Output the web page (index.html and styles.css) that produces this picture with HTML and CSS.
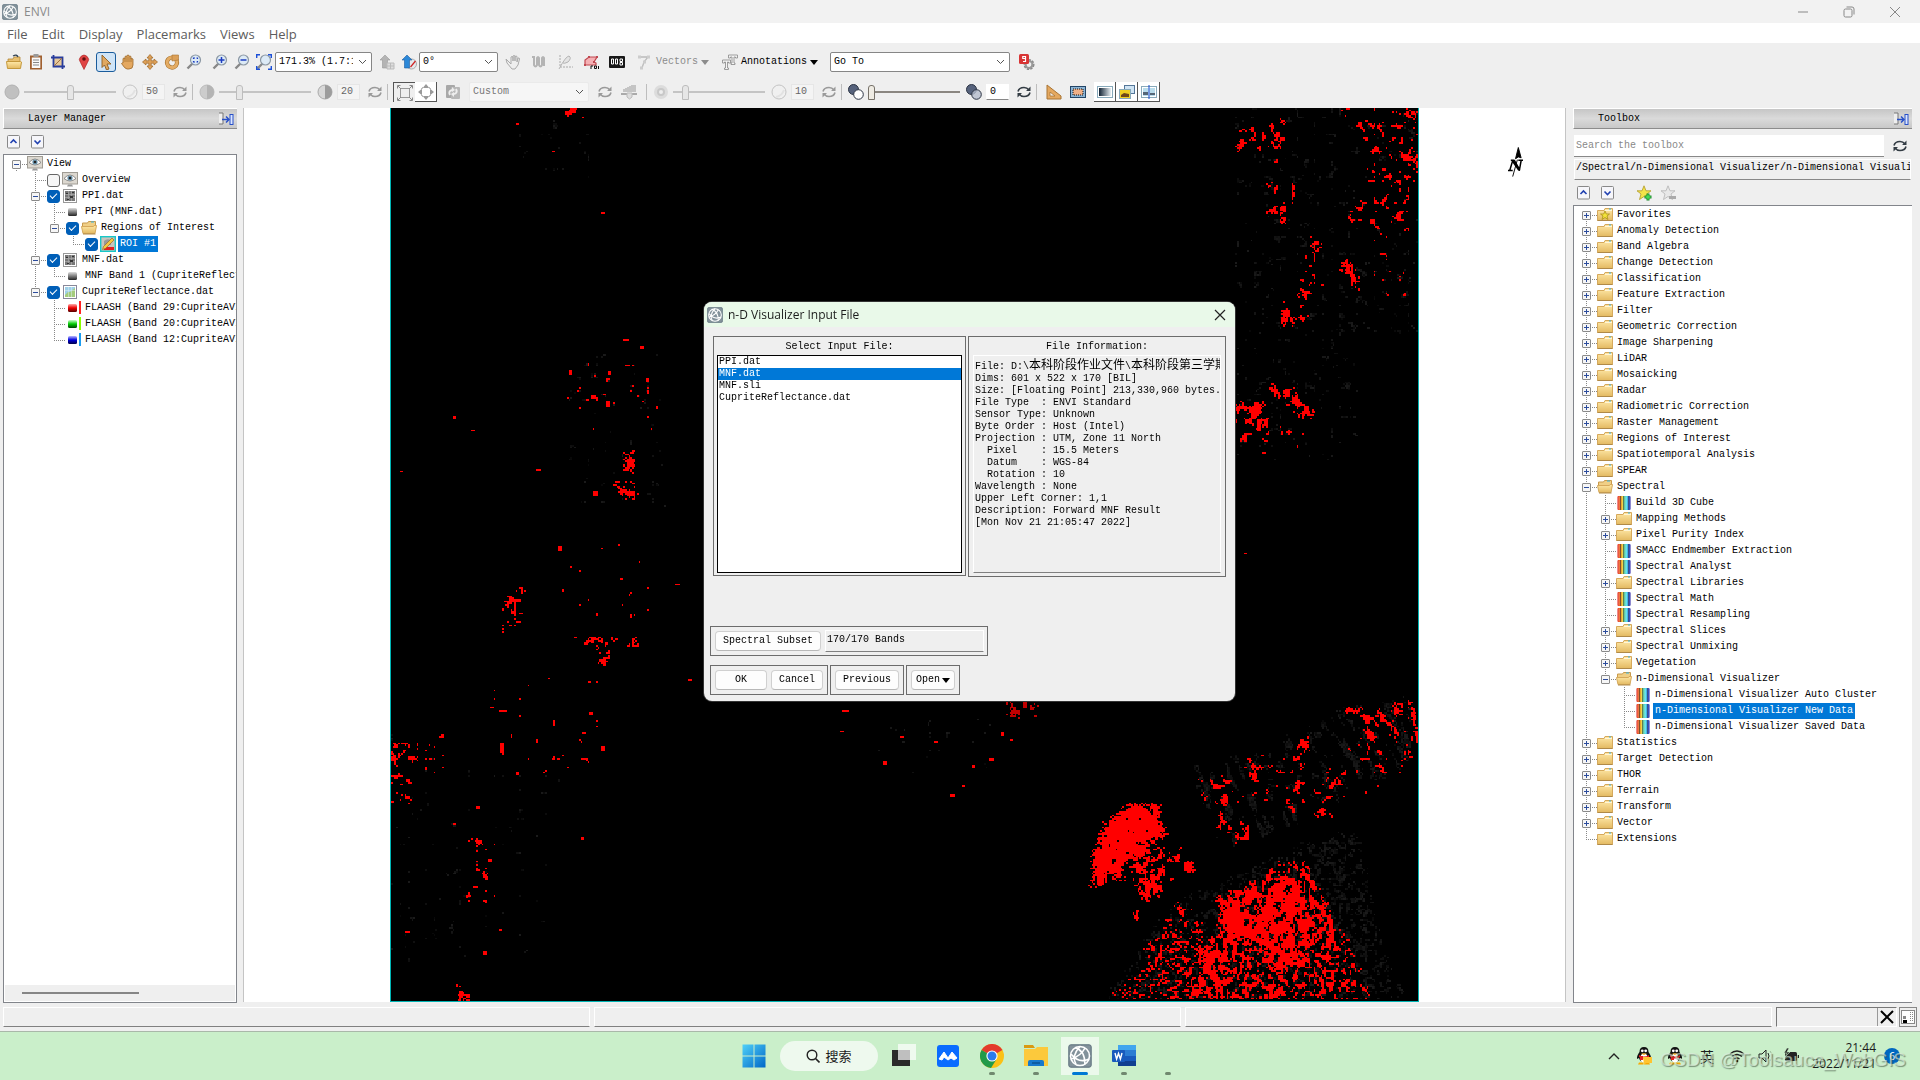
FILE: index.html
```html
<!DOCTYPE html>
<html lang="en">
<head>
<meta charset="utf-8">
<title>ENVI</title>
<link rel="stylesheet" href="styles.css">
</head>
<body>
<svg class="sprite" aria-hidden="true">
  <defs>
    <linearGradient id="gFolder" x1="0" y1="0" x2="0" y2="1"><stop offset="0" stop-color="#ffe9a8"/><stop offset="1" stop-color="#e3b961"/></linearGradient>
    <linearGradient id="gDark" x1="0" y1="0" x2="0" y2="1"><stop offset="0" stop-color="#ddd"/><stop offset="1" stop-color="#222"/></linearGradient>
    <linearGradient id="gRed" x1="0" y1="0" x2="0" y2="1"><stop offset="0" stop-color="#faa"/><stop offset=".5" stop-color="#e00"/><stop offset="1" stop-color="#500"/></linearGradient>
    <linearGradient id="gGreen" x1="0" y1="0" x2="0" y2="1"><stop offset="0" stop-color="#cfc"/><stop offset=".5" stop-color="#0c0"/><stop offset="1" stop-color="#040"/></linearGradient>
    <linearGradient id="gBlue" x1="0" y1="0" x2="0" y2="1"><stop offset="0" stop-color="#bbf"/><stop offset=".5" stop-color="#00d"/><stop offset="1" stop-color="#004"/></linearGradient>
    <linearGradient id="gWin" x1="0" y1="0" x2="1" y2="1"><stop offset="0" stop-color="#4fd0f8"/><stop offset="1" stop-color="#0067c8"/></linearGradient>
    <linearGradient id="gSpec" x1="0" y1="0" x2="1" y2="0"><stop offset="0" stop-color="#e01818"/><stop offset=".25" stop-color="#f08018"/><stop offset=".4" stop-color="#e8e050"/><stop offset=".55" stop-color="#58c8a0"/><stop offset=".7" stop-color="#40e0f0"/><stop offset=".85" stop-color="#5080e0"/><stop offset="1" stop-color="#2018a0"/></linearGradient>
    <linearGradient id="gMono" x1="0" y1="0" x2="1" y2="0"><stop offset="0" stop-color="#123"/><stop offset="1" stop-color="#e8f0f4"/></linearGradient>
  </defs>
  <symbol id="folder" viewBox="0 0 16 16"><path d="M.5 3.500h6.500l1-2h7.500V13.500H.5z" fill="url(#gFolder)" stroke="#d6a95c" stroke-width="1"/><path d="M8 3.500h7" stroke="#fff6d8"/><path d="M12 2h2" stroke="#35b6e8" stroke-width="1.200"/><path d="M.5 13.500h15" stroke="#b08a48"/></symbol>
  <symbol id="folderopen" viewBox="0 0 16 16"><path d="M1.500 3h5l1-1.500h7V8H1.500z" fill="#f0cf86" stroke="#c89a4c"/><path d="M10 2h3" stroke="#35b6e8"/><path d="M.5 6.500h12l.5-1h2.500L14 13.500H2z" fill="url(#gFolder)" stroke="#d6a95c"/><path d="M2 14h12.500" stroke="#b08a48"/></symbol>
  <symbol id="folderstar" viewBox="0 0 16 16"><use href="#folder"/><path d="M8 4l1.300 3H12.500L10 9l1 3.500L8 10.500 5 12.500 6 9 3.500 7H6.700z" fill="#f2e23a" stroke="#a89018" stroke-width=".8"/></symbol>
  <symbol id="spec" viewBox="0 0 16 16"><rect x="1.500" y="1" width="13" height="14" rx="1" fill="url(#gSpec)"/><path d="M4.500 1v14M7.500 1v14M12.500 1v14" stroke="#234" stroke-width=".8" opacity=".7"/><path d="M3 1.500v13M10 1.500v13" stroke="#fff" stroke-width=".6" opacity=".6"/></symbol>
  <symbol id="eye" viewBox="0 0 16 16"><rect x=".5" y=".5" width="15" height="11.500" fill="#dcd8d0" stroke="#a09c94"/><path d="M5 14.500h6l-1-2H6z" fill="#999"/><path d="M2 6.500q6-7 12 0q-6 5-12 0z" fill="#fff" stroke="#666" stroke-width=".7"/><circle cx="8" cy="6" r="2.600" fill="#6a94ac"/><circle cx="8" cy="6" r="1.300" fill="#222"/></symbol>
  <symbol id="raster" viewBox="0 0 16 16"><rect x="1.500" y="1.500" width="13" height="13" fill="#fff" stroke="#999"/><path d="M3 3h10v10H3z" fill="#777"/><path d="M3 6.500h10M3 9.500h10M6.500 3v10M9.500 3v10" stroke="#aaa" stroke-width=".7"/><path d="M4 5h2v1H4zM8 8h3v2H8zM5 11h2v1H5zM10 4h2v1h-2z" fill="#333"/></symbol>
  <symbol id="rastercolor" viewBox="0 0 16 16"><rect x="1.500" y="1.500" width="13" height="13" fill="#fff" stroke="#889"/><path d="M3 3h10v10H3z" fill="#9fd0e8"/><path d="M3 11l3-3 2 0 5-4v9H3z" fill="#a4cc7c"/><path d="M6.500 3v10M9.500 3v10M3 6.500h10" stroke="#dceef4" stroke-width=".5"/></symbol>
  <symbol id="chip" viewBox="0 0 16 16"><rect x="3" y="4" width="9" height="8" rx="1.500" fill="url(#gDark)"/></symbol>
  <symbol id="chipr" viewBox="0 0 16 16"><rect x="3" y="4" width="9" height="8" rx="1.500" fill="url(#gRed)"/><path d="M15 1v13" stroke="#f22" stroke-width="2"/></symbol>
  <symbol id="chipg" viewBox="0 0 16 16"><rect x="3" y="4" width="9" height="8" rx="1.500" fill="url(#gGreen)"/><path d="M15 1v13" stroke="#8f0" stroke-width="2"/></symbol>
  <symbol id="chipb" viewBox="0 0 16 16"><rect x="3" y="4" width="9" height="8" rx="1.500" fill="url(#gBlue)"/><path d="M15 1v13" stroke="#1a9cf0" stroke-width="2"/></symbol>
  <symbol id="roiimg" viewBox="0 0 16 16"><rect x=".7" y=".7" width="14.600" height="14.600" fill="#c8c4bc" stroke="#18c8c8" stroke-width="1.400"/><path d="M4 11h10v3H4z" fill="#e02020"/><path d="M4 5q3-3 7-1v5H4z" fill="#999"/><path d="M2.500 13.500l1-3L12 2l2 2-8.500 8.500z" fill="#f4c840" stroke="#886020" stroke-width=".6"/></symbol>
  <symbol id="logo" viewBox="0 0 24 24"><rect x=".8" y=".8" width="22.400" height="22.400" rx="2" fill="#83929b" stroke="#5c6f7c"/><g fill="none" stroke="#fff" stroke-width="1.600"><circle cx="12" cy="12" r="9.500"/><path d="M7 3.500q10 3 10 17M3 15q10-3 14-11M3 10q8 10 18 5M12 2.500Q3 12 8 20.500"/></g></symbol>
  <symbol id="dock" viewBox="0 0 16 16"><path d="M1 2h4v11H1" fill="#eee" stroke="#777"/><rect x="12" y="3.500" width="3" height="10" fill="#dbe6ff" stroke="#2850c8"/><path d="M4 8.500h6M8 5.500l3 3-3 3" fill="none" stroke="#2850c8" stroke-width="1.500"/></symbol>
  <symbol id="up" viewBox="0 0 14 14"><rect x=".5" y=".5" width="12" height="12.500" rx="1" fill="#f6f6fa" stroke="#888"/><path d="M3.500 8L6.500 5l3 3" fill="none" stroke="#2040b0" stroke-width="1.600"/></symbol>
  <symbol id="down" viewBox="0 0 14 14"><rect x=".5" y=".5" width="12" height="12.500" rx="1" fill="#f6f6fa" stroke="#888"/><path d="M3.500 5.500l3 3 3-3" fill="none" stroke="#2040b0" stroke-width="1.600"/></symbol>
  <symbol id="staradd" viewBox="0 0 16 16"><path d="M8 .8l2 5H15L11 9l1.500 5.500L8 11.500 3.500 14.500 5 9 1 5.800H6z" fill="#f4e34a" stroke="#b09a28" stroke-width=".8"/><path d="M12 8.500v7M8.500 12h7" stroke="#1c8c2c" stroke-width="3"/><path d="M12 9.500v5M9.500 12h5" stroke="#4be05c" stroke-width="1.400"/></symbol>
  <symbol id="stardel" viewBox="0 0 16 16"><path d="M8 .8l2 5H15L11 9l1.500 5.500L8 11.500 3.500 14.500 5 9 1 5.800H6z" fill="#e8e8e8" stroke="#b4b4b4" stroke-width=".8"/><path d="M9 12.500h7" stroke="#aaa" stroke-width="3"/></symbol>
  <symbol id="refresh" viewBox="0 0 16 16"><path d="M2 7.500q1-4 6-4 3 0 5 2.500M14 8.500q-1 4-6 4-3 0-5-2.500" fill="none" stroke="currentColor" stroke-width="1.600"/><path d="M14.500 2.500v4.500H10zM1.500 13.500V9H6z" fill="currentColor"/></symbol>
  <symbol id="open" viewBox="0 0 16 16"><path d="M2 5h5l1-2h6v5H2z" fill="#e8c070" stroke="#b48838" stroke-width=".8"/><path d="M7 2q4-2 5 1" fill="none" stroke="#345" stroke-width="1.300"/><path d="M.5 7.500h14l1 .5-1 6.500H1.500z" fill="url(#gFolder)" stroke="#c4983c"/></symbol>
  <symbol id="clip" viewBox="0 0 16 16"><rect x="2" y="1.500" width="12" height="14" fill="#a06030"/><rect x="3.800" y="3.500" width="8.500" height="10.500" fill="#fafafa"/><rect x="5.500" y="0" width="5" height="3" fill="#999"/><path d="M5 6h6M5 8.500h6M5 11h6" stroke="#888"/></symbol>
  <symbol id="crop" viewBox="0 0 16 16"><rect x="4" y="4" width="8" height="8" fill="#e6c898"/><path d="M3.500 1v11.500H15M1 3.500h11.500V15" fill="none" stroke="#283c9c" stroke-width="1.800"/><path d="M4 12l8-8" stroke="#a07040"/></symbol>
  <symbol id="pin" viewBox="0 0 16 16"><path d="M8 15.500L4.500 8.500A4.500 4.500 0 1 1 11.500 8.500z" fill="#e04444" stroke="#a82020" stroke-width=".6"/><circle cx="8" cy="5" r="1.800" fill="#601010"/></symbol>
  <symbol id="arrow" viewBox="0 0 16 16"><path d="M4 1l9 9H9l2 5-2.500 1L6.500 11 4 13.500z" fill="#e0a860" stroke="#8c5c20" stroke-width=".9"/></symbol>
  <symbol id="hand" viewBox="0 0 16 16"><path d="M3 9V4.500q1-1 2 0V2.500q1-1 2 0V1.500q1-1 2 0v1q1-1 2 0V5q1-1 2 0v6q0 4-4 4H7Q5 15 1.500 9.500q.5-1 1.500-.5z" fill="#e4a860" stroke="#9c6a2c" stroke-width=".8"/><path d="M5 4v4M7 3v5M9 3v5M11 4v4" stroke="#9c6a2c" stroke-width=".7"/></symbol>
  <symbol id="move" viewBox="0 0 16 16"><path d="M8 .5l3 3.500H9.200v2.800h2.800V5L15.500 8l-3.500 3V9.200H9.200v2.800H11L8 15.500l-3-3.500h1.800V9.200H4V11L.5 8 4 5v1.800h2.800V4H5z" fill="#dda058" stroke="#9c6424" stroke-width=".7"/></symbol>
  <symbol id="rot" viewBox="0 0 16 16"><path d="M12 5.500a5 5 0 1 1-4-2" fill="none" stroke="#a87430" stroke-width="4.200"/><path d="M12 5.500a5 5 0 1 1-4-2" fill="none" stroke="#e4ac64" stroke-width="3"/><path d="M8 7V1h6.500v5z" fill="#dca058" stroke="#a87430" stroke-width=".6"/></symbol>
  <symbol id="mag" viewBox="0 0 16 16"><path d="M6.500 9.500L1.500 14.500" stroke="#888" stroke-width="2.400"/><circle cx="9.500" cy="6" r="5" fill="#dceaf6" stroke="#8c98a4" stroke-width="1.200"/></symbol>
  <symbol id="magbox" viewBox="0 0 16 16"><use href="#mag"/><path d="M7.500 5V4H9M10.500 4h1v1M11.500 7v1h-1M9 8H7.500V7" fill="none" stroke="#1c3cc0" stroke-width="1.200"/></symbol>
  <symbol id="magin" viewBox="0 0 16 16"><use href="#mag"/><path d="M9.500 3v6M6.500 6h6" stroke="#1c3cc0" stroke-width="1.500"/></symbol>
  <symbol id="magout" viewBox="0 0 16 16"><use href="#mag"/><path d="M6.500 6h6" stroke="#1c3cc0" stroke-width="1.500"/></symbol>
  <symbol id="magfit" viewBox="0 0 16 16"><use href="#mag"/><path d="M.7 4V.7H4M12 .7h3.300V4M15.300 12v3.300H12M4 15.300H.7V12" fill="none" stroke="#1c50d8" stroke-width="1.400"/></symbol>
  <symbol id="upgrey" viewBox="0 0 16 16"><path d="M6 1l5 5H8.500v8h-5V6H1z" fill="#b4b4b4" stroke="#999" stroke-width=".6"/><path d="M8 9h7v6H8zM8 12h7M11.500 9v6" fill="#ddd" stroke="#bbb"/></symbol>
  <symbol id="upblue" viewBox="0 0 16 16"><circle cx="10.500" cy="10" r="5" fill="#e4e8ec" stroke="#aaa"/><path d="M6 1l5 5H8.500v8h-5V6H1z" fill="#2c88d8" stroke="#1c5ca0" stroke-width=".6"/><path d="M9.500 13l5-6" stroke="#d02020" stroke-width="1.200"/></symbol>
  <symbol id="handgrey" viewBox="0 0 16 16"><path d="M7 15L2 9 1 5l3 3 2 2V3q1-1 2 0v4V2q1-1 2 0v5V2.500q1-1 2 0V8l1-4q1.500-.5 1.500 1L13 11l-3 4z" fill="#eee" stroke="#aaa"/></symbol>
  <symbol id="wave" viewBox="0 0 16 16"><path d="M1 3h2v8q1.500 3 3 0V4q1-2 2 0v7q1.500 3 3 0V4q1-2 2 0v8" fill="none" stroke="#b4b4b4" stroke-width="2"/></symbol>
  <symbol id="plot" viewBox="0 0 16 16"><path d="M3 1v12h13" fill="none" stroke="#aaa" stroke-dasharray="2 1"/><path d="M2 15Q9 2 12 2q3 2-1 6-4 2-5 1" fill="#e4e4e4" stroke="#b4b4b4"/></symbol>
  <symbol id="roi" viewBox="0 0 16 16"><path d="M2 11V6l4-3h8l-3 5 2 1v2z" fill="#f4b0b4" stroke="#c04850" stroke-width="1.200"/><path d="M1 10h2v2H1zM5 2h2v2H5zM13 2h2v2h-2zM10 7h2v2h-2z" fill="#c04850"/><path d="M8 15v-3h2M11.500 12h2v2.500h-2zM15.500 12v3" fill="none" stroke="#111"/></symbol>
  <symbol id="count" viewBox="0 0 16 16"><rect x="0" y="2" width="16" height="12" rx="1" fill="#181818"/><path d="M2.500 5h2v5h-2zM6.500 5h2v5h-2zM11 5h2.500v2.500H11zM11 8.500h2.500V11H11z" fill="none" stroke="#fff" stroke-width="1"/></symbol>
  <symbol id="vec" viewBox="0 0 16 16"><path d="M2 3h9L7 8l-2 6" fill="none" stroke="#bbb" stroke-width="1.300"/><path d="M1 1.500h3v3H1zM10 1.500h3v3h-3zM6 6.500h3v3H6zM3 12.500h3v3H3z" fill="#ccc"/></symbol>
  <symbol id="ann" viewBox="0 0 16 16"><path d="M6.500 4V1h9v3h-2V3h-1.500v6h1v1.500H9V9h1V3H8.500v1zM.5 9V6h8v3h-2V8H5.500v6h1v1.500h-4V14h1V8h-1v1z" fill="#f4f4f4" stroke="#888" stroke-width=".8"/></symbol>
  <symbol id="gear" viewBox="0 0 16 16"><circle cx="10" cy="10.500" r="4" fill="none" stroke="#888" stroke-width="3" stroke-dasharray="2 1"/><circle cx="10" cy="10.500" r="3.500" fill="none" stroke="#999" stroke-width="2"/><rect x="0" y="0" width="10" height="10" rx="1.500" fill="#d83434"/><path d="M6.500 4.500H3.800v-2h2.700V7.500H4" fill="none" stroke="#fff" stroke-width="1.200"/></symbol>
  <symbol id="ball" viewBox="0 0 16 16"><circle cx="8" cy="8" r="7" fill="#c0c0c0" stroke="#b0b0b0"/></symbol>
  <symbol id="ballw" viewBox="0 0 16 16"><circle cx="8" cy="8" r="7" fill="#f0f0f0" stroke="#c4c4c4"/><path d="M5 13Q11 12 13 6" fill="none" stroke="#e2e2e2" stroke-width="2"/></symbol>
  <symbol id="half" viewBox="0 0 16 16"><circle cx="8" cy="8" r="7" fill="#ccc" stroke="#bbb"/><path d="M8 1a7 7 0 0 1 0 14z" fill="#b4b4b4"/></symbol>
  <symbol id="halfd" viewBox="0 0 16 16"><circle cx="8" cy="8" r="7" fill="#d8d8d8" stroke="#aaa"/><path d="M8 1a7 7 0 0 1 0 14z" fill="#9c9c9c"/></symbol>
  <symbol id="blurball" viewBox="0 0 16 16"><circle cx="8" cy="8" r="7" fill="#dcdcdc"/><circle cx="8" cy="8" r="3" fill="#eee" stroke="#c8c8c8" stroke-width="2"/></symbol>
  <symbol id="trans" viewBox="0 0 16 16"><circle cx="5.500" cy="5.500" r="5" fill="#56627c" stroke="#2c3444"/><circle cx="10.500" cy="10.500" r="4.800" fill="#fff" stroke="#2c3444"/></symbol>
  <symbol id="trans2" viewBox="0 0 16 16"><circle cx="5.500" cy="5.500" r="5" fill="#56627c" stroke="#2c3444"/><circle cx="10.500" cy="10.500" r="4.800" fill="#b4bccc" fill-opacity=".8" stroke="#2c3444"/></symbol>
  <symbol id="ext1" viewBox="0 0 16 16"><rect x="3.500" y="3.500" width="9" height="9" fill="none" stroke="#999"/><path d="M.5 3.500v-3h3M12.500.500h3v3M.5 12.500v3h3M12.500 15.500h3v-3M1 1l3 3M15 1l-3 3M1 15l3-3M15 15l-3-3" fill="none" stroke="#888"/></symbol>
  <symbol id="ext2" viewBox="0 0 16 16"><rect x="3.500" y="3.500" width="9" height="9" rx="2" fill="none" stroke="#999"/><path d="M8 0l2.500 3h-5zM8 16l2.500-3h-5zM0 8l3-2.500v5zM16 8l-3-2.500v5z" fill="#999"/></symbol>
  <symbol id="stretch" viewBox="0 0 16 16"><rect x="1" y="1" width="9" height="13" rx="1" fill="#a8a8a8"/><rect x="6" y="3" width="9" height="12" rx="1" fill="#b8b8b8"/><path d="M5 11q-2-4 2-5M11 5q2 4-2 5" fill="none" stroke="#eee" stroke-width="2"/><path d="M7 3l3 3-3 2zM9 8L6 10l3 3z" fill="#eee"/></symbol>
  <symbol id="hist" viewBox="0 0 16 16"><path d="M2 8V5h2V4h2V3h2V2h2V1h5v7z" fill="#c4c4c4"/><path d="M0 10h16" stroke="#aaa" stroke-width="2"/><path d="M6 9h5v4l-2.500 2L6 13z" fill="#ddd" stroke="#bbb"/></symbol>
  <symbol id="ruler" viewBox="0 0 16 16"><path d="M1 1l14 11v3H1z" fill="#e4a860" stroke="#a87434"/><path d="M4 8v4h5z" fill="#efefef" stroke="#a87434" stroke-width=".8"/></symbol>
  <symbol id="pic1" viewBox="0 0 16 16"><rect x=".5" y="2.500" width="15" height="11" fill="#8cb4d4" stroke="#246"/><rect x="3" y="5" width="10" height="6" fill="#f0b088" stroke="#111" stroke-dasharray="1 1"/></symbol>
  <symbol id="pic2" viewBox="0 0 16 16"><rect x=".5" y="2.500" width="15" height="11" fill="#fff" stroke="#8ab"/><rect x="2" y="4" width="12" height="8" fill="url(#gMono)"/></symbol>
  <symbol id="pic3" viewBox="0 0 16 16"><rect x="5.500" y="1.500" width="10" height="8" fill="#cfe4f4" stroke="#579"/><rect x=".5" y="5.500" width="11" height="9" fill="#f0d020" stroke="#8ab"/><path d="M2 11l3-2 5 1v3H2z" fill="#704818"/></symbol>
  <symbol id="pic4" viewBox="0 0 16 16"><rect x=".5" y="2.500" width="15" height="11" fill="#fff" stroke="#8ab"/><path d="M2 4h5.500v8H2zM8.500 4H14v8H8.500z" fill="#b8dcec"/><path d="M2 8h5v3H2zM9 9h5v2H9z" fill="#567"/><path d="M8 1v14" stroke="#14c"/></symbol>
  <symbol id="qq" viewBox="0 0 16 18"><path d="M8 0q4.500 0 4.500 5 3 4 2.500 7l-2-1q-1 4-5 4t-5-4l-2 1Q.5 9 3.500 5 3.500 0 8 0z" fill="#111"/><ellipse cx="8" cy="11" rx="3.800" ry="4.500" fill="#fff"/><circle cx="6.300" cy="3.800" r="1.400" fill="#fff"/><circle cx="9.700" cy="3.800" r="1.400" fill="#fff"/><path d="M5 6.500h6L8 8z" fill="#f8a800"/><path d="M3 8q5 3 10 0v2q-5 3-10 0zM4 9h3v4H4z" fill="#e42020"/><path d="M3 15.500h4.500v2H2zM8.500 15.500H13l1 2H8.500z" fill="#f8a800"/></symbol>
</svg>

<div class="app">
  <header class="titlebar">
    <svg class="ic"><use href="#logo"/></svg><span class="apptitle">ENVI</span>
    <div class="winbtns">
      <button aria-label="Minimize"><svg viewBox="0 0 12 12"><path d="M1 6h10" stroke="#888"/></svg></button>
      <button aria-label="Restore"><svg viewBox="0 0 12 12" fill="none" stroke="#888"><rect x="1" y="3" width="8" height="8" rx="1.500"/><path d="M3.500 1H9q2 0 2 2v5.500"/></svg></button>
      <button aria-label="Close"><svg viewBox="0 0 12 12"><path d="M1 1l10 10M11 1L1 11" stroke="#888"/></svg></button>
    </div>
  </header>
  <nav class="menubar"><button>File</button><button>Edit</button><button>Display</button><button>Placemarks</button><button>Views</button><button>Help</button></nav>

  <div class="toolbars">
    <div class="bar">
      <div class="grp"><svg class="ic"><use href="#open"/></svg><svg class="ic"><use href="#clip"/></svg><svg class="ic"><use href="#crop"/></svg></div>
      <div class="grp"><svg class="ic"><use href="#pin"/></svg><button class="active" aria-label="Select"><svg class="ic"><use href="#arrow"/></svg></button><svg class="ic"><use href="#hand"/></svg><svg class="ic"><use href="#move"/></svg><svg class="ic"><use href="#rot"/></svg><svg class="ic"><use href="#magbox"/></svg></div>
      <div class="grp"><svg class="ic"><use href="#magin"/></svg><svg class="ic"><use href="#magout"/></svg><svg class="ic"><use href="#magfit"/></svg></div>
      <select class="combo c-zoom" aria-label="Zoom"><option>171.3% (1.7:1)</option></select>
      <div class="grp g-up"><svg class="ic"><use href="#upgrey"/></svg><svg class="ic"><use href="#upblue"/></svg></div>
      <select class="combo c-rot" aria-label="Rotation"><option>0°</option></select>
      <div class="grp wide"><svg class="ic"><use href="#handgrey"/></svg><svg class="ic"><use href="#wave"/></svg><svg class="ic"><use href="#plot"/></svg><svg class="ic"><use href="#roi"/></svg><svg class="ic"><use href="#count"/></svg></div>
      <button class="drop off"><svg class="ic"><use href="#vec"/></svg>Vectors<i class="tri"></i></button>
      <button class="drop"><svg class="ic"><use href="#ann"/></svg>Annotations<i class="tri"></i></button>
      <select class="combo c-goto" aria-label="Go To"><option>Go To</option></select>
      <svg class="ic"><use href="#gear"/></svg>
    </div>
    <div class="bar two">
      <div class="sl"><svg class="ic"><use href="#ball"/></svg><input type="range" aria-label="Brightness" value="50" disabled><svg class="ic"><use href="#ballw"/></svg><input class="num" aria-label="Brightness value" value="50" disabled><svg class="ic rf"><use href="#refresh"/></svg></div>
      <div class="sl"><svg class="ic"><use href="#half"/></svg><input type="range" aria-label="Contrast" value="20" disabled><svg class="ic"><use href="#halfd"/></svg><input class="num" aria-label="Contrast value" value="20" disabled><svg class="ic rf"><use href="#refresh"/></svg></div>
      <div class="sl st"><div class="toggles"><button aria-label="Full extent"><svg class="ic"><use href="#ext1"/></svg></button><button class="on" aria-label="View extent"><svg class="ic"><use href="#ext2"/></svg></button></div><svg class="ic"><use href="#stretch"/></svg><select class="combo c-cust" aria-label="Stretch" disabled><option>Custom</option></select><svg class="ic rf"><use href="#refresh"/></svg><svg class="ic"><use href="#hist"/></svg></div>
      <div class="sl"><svg class="ic"><use href="#blurball"/></svg><input type="range" aria-label="Sharpen" value="10" disabled><svg class="ic"><use href="#ballw"/></svg><input class="num" aria-label="Sharpen value" value="10" disabled><svg class="ic rf"><use href="#refresh"/></svg></div>
      <div class="sl"><svg class="ic"><use href="#trans"/></svg><input type="range" class="live" aria-label="Transparency" value="0"><svg class="ic"><use href="#trans2"/></svg><input class="num live" aria-label="Transparency value" value="0"><svg class="ic rf dark"><use href="#refresh"/></svg></div>
      <div class="sl last"><svg class="ic"><use href="#ruler"/></svg><svg class="ic"><use href="#pic1"/></svg><div class="toggles"><button class="on" aria-label="Blend"><svg class="ic"><use href="#pic2"/></svg></button><button class="on" aria-label="Flicker"><svg class="ic"><use href="#pic3"/></svg></button><button class="on" aria-label="Swipe"><svg class="ic"><use href="#pic4"/></svg></button></div></div>
    </div>
  </div>

  <main class="work">
    <aside class="panel left">
      <h2 class="phead"><span>Layer Manager</span><svg class="ic"><use href="#dock"/></svg></h2>
      <div class="ptools"><svg class="ic14"><use href="#up"/></svg><svg class="ic14"><use href="#down"/></svg></div>
      <div class="treebox">
        <ul class="tree">
          <li><div class="row"><button class="exp" aria-label="Collapse"></button><svg class="ic"><use href="#eye"/></svg><span class="lbl">View</span></div>
            <ul>
              <li><label class="row leaf"><input type="checkbox"><svg class="ic"><use href="#eye"/></svg><span class="lbl">Overview</span></label></li>
              <li><div class="row"><button class="exp" aria-label="Collapse"></button><input type="checkbox" id="c1" checked><svg class="ic"><use href="#raster"/></svg><label class="lbl" for="c1">PPI.dat</label></div>
                <ul>
                  <li><div class="row leaf"><svg class="ic"><use href="#chip"/></svg><span class="lbl">PPI (MNF.dat)</span></div></li>
                  <li><div class="row"><button class="exp" aria-label="Collapse"></button><input type="checkbox" id="c2" checked><svg class="ic"><use href="#folderopen"/></svg><label class="lbl" for="c2">Regions of Interest</label></div>
                    <ul><li><div class="row leaf"><input type="checkbox" id="c3" checked><svg class="ic"><use href="#roiimg"/></svg><label class="lbl sel" for="c3">ROI #1</label></div></li></ul>
                  </li>
                </ul>
              </li>
              <li><div class="row"><button class="exp" aria-label="Collapse"></button><input type="checkbox" id="c4" checked><svg class="ic"><use href="#raster"/></svg><label class="lbl" for="c4">MNF.dat</label></div>
                <ul><li><div class="row leaf"><svg class="ic"><use href="#chip"/></svg><span class="lbl">MNF Band 1 (CupriteReflectance.dat)</span></div></li></ul>
              </li>
              <li><div class="row"><button class="exp" aria-label="Collapse"></button><input type="checkbox" id="c5" checked><svg class="ic"><use href="#rastercolor"/></svg><label class="lbl" for="c5">CupriteReflectance.dat</label></div>
                <ul>
                  <li><div class="row leaf"><svg class="ic"><use href="#chipr"/></svg><span class="lbl">FLAASH (Band 29:CupriteAVIRIS)</span></div></li>
                  <li><div class="row leaf"><svg class="ic"><use href="#chipg"/></svg><span class="lbl">FLAASH (Band 20:CupriteAVIRIS)</span></div></li>
                  <li><div class="row leaf"><svg class="ic"><use href="#chipb"/></svg><span class="lbl">FLAASH (Band 12:CupriteAVIRIS)</span></div></li>
                </ul>
              </li>
            </ul>
          </li>
        </ul>
        <div class="hscroll"><div class="thumb"></div></div>
      </div>
    </aside>

    <section class="view">
      <canvas id="scene" width="601" height="522"></canvas>
      <svg class="north" viewBox="0 0 16 34"><path d="M11 1l3 11-3-1-3 2zM10 14L5 32" fill="#000" stroke="#000" stroke-width="1"/><path d="M2 25l3-10h2l5 9M12 26l2-11M0 25.500h5M11 14.500h5M3 14.500h4" fill="none" stroke="#000" stroke-width="1.600"/><path d="M5 15l7 10" stroke="#000" stroke-width="2.600"/></svg>
    </section>

    <aside class="panel right">
      <h2 class="phead"><span>Toolbox</span><svg class="ic"><use href="#dock"/></svg></h2>
      <div class="search"><input type="text" placeholder="Search the toolbox" aria-label="Search the toolbox"><svg class="ic"><use href="#refresh"/></svg></div>
      <div class="path">/Spectral/n-Dimensional Visualizer/n-Dimensional Visualizer New Data</div>
      <div class="ptools"><svg class="ic14"><use href="#up"/></svg><svg class="ic14"><use href="#down"/></svg><svg class="ic star"><use href="#staradd"/></svg><svg class="ic"><use href="#stardel"/></svg></div>
      <div class="treebox">
        <ul class="tree">
          <li><div class="row"><button class="exp plus" aria-label="Expand"></button><svg class="ic"><use href="#folderstar"/></svg><span class="lbl">Favorites</span></div></li>
          <li><div class="row"><button class="exp plus" aria-label="Expand"></button><svg class="ic"><use href="#folder"/></svg><span class="lbl">Anomaly Detection</span></div></li>
          <li><div class="row"><button class="exp plus" aria-label="Expand"></button><svg class="ic"><use href="#folder"/></svg><span class="lbl">Band Algebra</span></div></li>
          <li><div class="row"><button class="exp plus" aria-label="Expand"></button><svg class="ic"><use href="#folder"/></svg><span class="lbl">Change Detection</span></div></li>
          <li><div class="row"><button class="exp plus" aria-label="Expand"></button><svg class="ic"><use href="#folder"/></svg><span class="lbl">Classification</span></div></li>
          <li><div class="row"><button class="exp plus" aria-label="Expand"></button><svg class="ic"><use href="#folder"/></svg><span class="lbl">Feature Extraction</span></div></li>
          <li><div class="row"><button class="exp plus" aria-label="Expand"></button><svg class="ic"><use href="#folder"/></svg><span class="lbl">Filter</span></div></li>
          <li><div class="row"><button class="exp plus" aria-label="Expand"></button><svg class="ic"><use href="#folder"/></svg><span class="lbl">Geometric Correction</span></div></li>
          <li><div class="row"><button class="exp plus" aria-label="Expand"></button><svg class="ic"><use href="#folder"/></svg><span class="lbl">Image Sharpening</span></div></li>
          <li><div class="row"><button class="exp plus" aria-label="Expand"></button><svg class="ic"><use href="#folder"/></svg><span class="lbl">LiDAR</span></div></li>
          <li><div class="row"><button class="exp plus" aria-label="Expand"></button><svg class="ic"><use href="#folder"/></svg><span class="lbl">Mosaicking</span></div></li>
          <li><div class="row"><button class="exp plus" aria-label="Expand"></button><svg class="ic"><use href="#folder"/></svg><span class="lbl">Radar</span></div></li>
          <li><div class="row"><button class="exp plus" aria-label="Expand"></button><svg class="ic"><use href="#folder"/></svg><span class="lbl">Radiometric Correction</span></div></li>
          <li><div class="row"><button class="exp plus" aria-label="Expand"></button><svg class="ic"><use href="#folder"/></svg><span class="lbl">Raster Management</span></div></li>
          <li><div class="row"><button class="exp plus" aria-label="Expand"></button><svg class="ic"><use href="#folder"/></svg><span class="lbl">Regions of Interest</span></div></li>
          <li><div class="row"><button class="exp plus" aria-label="Expand"></button><svg class="ic"><use href="#folder"/></svg><span class="lbl">Spatiotemporal Analysis</span></div></li>
          <li><div class="row"><button class="exp plus" aria-label="Expand"></button><svg class="ic"><use href="#folder"/></svg><span class="lbl">SPEAR</span></div></li>
          <li><div class="row"><button class="exp" aria-label="Collapse"></button><svg class="ic"><use href="#folderopen"/></svg><span class="lbl">Spectral</span></div>
            <ul>
              <li><div class="row leaf"><svg class="ic"><use href="#spec"/></svg><span class="lbl">Build 3D Cube</span></div></li>
              <li><div class="row"><button class="exp plus" aria-label="Expand"></button><svg class="ic"><use href="#folder"/></svg><span class="lbl">Mapping Methods</span></div></li>
              <li><div class="row"><button class="exp plus" aria-label="Expand"></button><svg class="ic"><use href="#folder"/></svg><span class="lbl">Pixel Purity Index</span></div></li>
              <li><div class="row leaf"><svg class="ic"><use href="#spec"/></svg><span class="lbl">SMACC Endmember Extraction</span></div></li>
              <li><div class="row leaf"><svg class="ic"><use href="#spec"/></svg><span class="lbl">Spectral Analyst</span></div></li>
              <li><div class="row"><button class="exp plus" aria-label="Expand"></button><svg class="ic"><use href="#folder"/></svg><span class="lbl">Spectral Libraries</span></div></li>
              <li><div class="row leaf"><svg class="ic"><use href="#spec"/></svg><span class="lbl">Spectral Math</span></div></li>
              <li><div class="row leaf"><svg class="ic"><use href="#spec"/></svg><span class="lbl">Spectral Resampling</span></div></li>
              <li><div class="row"><button class="exp plus" aria-label="Expand"></button><svg class="ic"><use href="#folder"/></svg><span class="lbl">Spectral Slices</span></div></li>
              <li><div class="row"><button class="exp plus" aria-label="Expand"></button><svg class="ic"><use href="#folder"/></svg><span class="lbl">Spectral Unmixing</span></div></li>
              <li><div class="row"><button class="exp plus" aria-label="Expand"></button><svg class="ic"><use href="#folder"/></svg><span class="lbl">Vegetation</span></div></li>
              <li><div class="row"><button class="exp" aria-label="Collapse"></button><svg class="ic"><use href="#folderopen"/></svg><span class="lbl">n-Dimensional Visualizer</span></div>
                <ul>
                  <li><div class="row leaf"><svg class="ic"><use href="#spec"/></svg><span class="lbl">n-Dimensional Visualizer Auto Cluster</span></div></li>
                  <li><div class="row leaf"><svg class="ic"><use href="#spec"/></svg><span class="lbl sel">n-Dimensional Visualizer New Data</span></div></li>
                  <li><div class="row leaf"><svg class="ic"><use href="#spec"/></svg><span class="lbl">n-Dimensional Visualizer Saved Data</span></div></li>
                </ul>
              </li>
            </ul>
          </li>
          <li><div class="row"><button class="exp plus" aria-label="Expand"></button><svg class="ic"><use href="#folder"/></svg><span class="lbl">Statistics</span></div></li>
          <li><div class="row"><button class="exp plus" aria-label="Expand"></button><svg class="ic"><use href="#folder"/></svg><span class="lbl">Target Detection</span></div></li>
          <li><div class="row"><button class="exp plus" aria-label="Expand"></button><svg class="ic"><use href="#folder"/></svg><span class="lbl">THOR</span></div></li>
          <li><div class="row"><button class="exp plus" aria-label="Expand"></button><svg class="ic"><use href="#folder"/></svg><span class="lbl">Terrain</span></div></li>
          <li><div class="row"><button class="exp plus" aria-label="Expand"></button><svg class="ic"><use href="#folder"/></svg><span class="lbl">Transform</span></div></li>
          <li><div class="row"><button class="exp plus" aria-label="Expand"></button><svg class="ic"><use href="#folder"/></svg><span class="lbl">Vector</span></div></li>
          <li><div class="row leaf"><svg class="ic"><use href="#folder"/></svg><span class="lbl">Extensions</span></div></li>
        </ul>
      </div>
    </aside>
  </main>

  <footer class="status">
    <div class="seg"></div><div class="seg"></div><div class="seg"></div>
    <div class="prog"><button aria-label="Cancel task"><svg viewBox="0 0 14 14"><path d="M1 1l12 12M13 1L1 13" stroke="#000" stroke-width="2"/></svg></button></div>
    <button class="cfg" aria-label="Task list"><svg viewBox="0 0 14 14"><rect x=".5" y=".5" width="13" height="13" fill="#fff" stroke="#888"/><path d="M2 10h4v3H2z" fill="#000"/><path d="M2 6h3v3H2z" fill="#888"/><path d="M9.500 2v10M11.500 2v10" stroke="#888" stroke-dasharray="1 1"/></svg></button>
  </footer>

  <div class="taskbar">
    <div></div>
    <div class="apps">
      <button class="app-tile" aria-label="Start"><svg viewBox="0 0 24 24"><path d="M.5.500h11v11H.5zM12.500.500h11v11h-11zM.5 12.500h11v11H.5zM12.500 12.500h11v11h-11z" fill="url(#gWin)"/></svg></button>
      <button class="pill"><svg viewBox="0 0 14 14"><circle cx="6" cy="6" r="4.800" fill="none" stroke="#222" stroke-width="1.400"/><path d="M9.500 9.500L13.500 13.500" stroke="#222" stroke-width="1.600"/></svg>搜索</button>
      <button class="app-tile" aria-label="Task view"><svg viewBox="0 0 24 24"><rect x="0" y="6" width="18" height="16" fill="#2a2a2a"/><rect x="6" y="0" width="18" height="16" fill="#fff" fill-opacity=".7"/></svg></button>
      <button class="app-tile" aria-label="Meeting"><svg viewBox="0 0 24 24"><rect x="1" y="1" width="22" height="22" rx="3" fill="#0a6cff"/><path d="M3 15l5-7 4 6 4-6 5 6-3 2-3-2-3 2-4-3-2 3z" fill="#fff" stroke="#fff" stroke-linejoin="round"/></svg></button>
      <button class="app-tile run" aria-label="Chrome"><svg viewBox="0 0 24 24"><circle cx="12" cy="12" r="12" fill="#fbc116"/><path d="M12 12L1.600 6A12 12 0 0 1 22.400 6z" fill="#e33b2e"/><path d="M12 12v0L1.600 6A12 12 0 0 0 11 24l5-8z" fill="#229a4a"/><circle cx="12" cy="12" r="5.600" fill="#fff"/><circle cx="12" cy="12" r="4.500" fill="#2c7bea"/></svg></button>
      <button class="app-tile run" aria-label="Explorer"><svg viewBox="0 0 24 24"><path d="M0 1h9l2 3h-11z" fill="#d99a12"/><path d="M0 5h11l2-2h11v19H0z" fill="#fcc93c"/><path d="M4 22v-4q0-2 2-2h12q2 0 2 2v4z" fill="#1679cc"/><path d="M8 19h8" stroke="#0a5494" stroke-width="1.500"/></svg></button>
      <button class="app-tile run cur" aria-label="ENVI"><svg><use href="#logo"/></svg></button>
      <button class="app-tile run" aria-label="Word"><svg viewBox="0 0 24 24"><path d="M6 1h18v6H6z" fill="#41a5ee"/><path d="M6 6h18v6H6z" fill="#2b7cd3"/><path d="M6 12h18v5H6z" fill="#185abd"/><path d="M6 17h18v5H6z" fill="#103f91"/><rect x="0" y="6" width="13" height="12" rx="1" fill="#185abd"/><path d="M3 9l1.600 6L6.500 9.500 8.400 15 10 9" fill="none" stroke="#fff" stroke-width="1.400"/></svg></button>
      <button class="app-tile run" aria-label="Background app"></button>
    </div>
    <div class="tray">
      <svg class="chev" viewBox="0 0 12 8"><path d="M1 7l5-5 5 5" fill="none" stroke="#222" stroke-width="1.400"/></svg>
      <svg class="qq" viewBox="0 0 16 18"><use href="#qq"/><path d="M7 10h9v6H10l-2 2z" fill="#ffc430"/></svg>
      <svg class="qq"><use href="#qq"/></svg>
      <span class="ime">英</span>
      <svg class="ic" viewBox="0 0 16 16"><path d="M1 6q7-6 14 0M3 8.500q5-4 10 0M5.500 11q2.500-2 5 0" fill="none" stroke="#222" stroke-width="1.300"/><circle cx="8" cy="13" r="1.300"/></svg>
      <svg class="ic vol" viewBox="0 0 16 16"><path d="M1 6h3l4-4v12l-4-4H1z" fill="none" stroke="#222"/><path d="M10 5q2 3 0 6" fill="none" stroke="#222"/><path d="M12 3q4 5 0 10" fill="none" stroke="#9bb89b"/></svg>
      <svg class="ic" viewBox="0 0 16 16"><rect x="2" y="4" width="12" height="9" rx="1.500" fill="#222"/><path d="M15.500 7v3" stroke="#222" stroke-width="1.500"/><path d="M4 0L1 5h3L2 9l5-5H4l2-4z" fill="#222" stroke="#caefca" stroke-width=".6"/></svg>
      <div class="clock"><span>21:44</span><span>2022/11/21</span></div>
      <span class="badge">6</span>
      <span class="mark">CSDN @Toolsauce_WebGIS</span>
    </div>
  </div>
</div>

<section class="dialog" role="dialog" aria-labelledby="dt">
  <header class="dhead"><svg class="ic"><use href="#logo"/></svg><h1 id="dt">n-D Visualizer Input File</h1><button aria-label="Close"><svg viewBox="0 0 12 12"><path d="M1 1l10 10M11 1L1 11" stroke="#222" stroke-width="1.200"/></svg></button></header>
  <div class="dtop">
    <div class="frame files"><h3>Select Input File:</h3>
      <ul class="list" role="listbox" aria-label="Select Input File"><li role="option">PPI.dat</li><li role="option" class="on" aria-selected="true">MNF.dat</li><li role="option">MNF.sli</li><li role="option">CupriteReflectance.dat</li></ul>
    </div>
    <div class="frame info"><h3>File Information:</h3>
<pre>File: D:\<span class="cjk">本科阶段作业文件</span>\<span class="cjk">本科阶段第三学期</span>
Dims: 601 x 522 x 170 [BIL]
Size: [Floating Point] 213,330,960 bytes.
File Type  : ENVI Standard
Sensor Type: Unknown
Byte Order : Host (Intel)
Projection : UTM, Zone 11 North
  Pixel    : 15.5 Meters
  Datum    : WGS-84
  Rotation : 10
Wavelength : None
Upper Left Corner: 1,1
Description: Forward MNF Result
[Mon Nov 21 21:05:47 2022]</pre>
    </div>
  </div>
  <div class="dsub"><div class="frame btns"><button class="b-sub">Spectral Subset</button><output>170/170 Bands</output></div></div>
  <div class="dacts">
    <div class="frame btns"><button class="b-ok">OK</button><button class="b-ok">Cancel</button></div>
    <div class="frame btns"><button class="b-prev">Previous</button></div>
    <div class="frame btns"><button class="b-open">Open<i class="tri"></i></button></div>
  </div>
</section>
<script src="scene.js"></script>
</body>
</html>
```
FILE: styles.css
```css
* { box-sizing: border-box; }
body { margin: 0; background: #efefef; color: #000; font: 10px/16px "Liberation Mono", "Noto Sans CJK SC", monospace; overflow: hidden; }
button, input, select, output { font: inherit; color: inherit; margin: 0; }
button { border: 0; padding: 0; background: none; }
ul { list-style: none; margin: 0; padding: 0; }
h1, h2, h3, pre { margin: 0; font: inherit; }
svg { display: block; flex: none; }
.sprite { position: absolute; width: 0; height: 0; }
.ic { width: 16px; height: 16px; }
.ic14 { width: 14px; height: 14px; }
.tri { border: 4px solid transparent; border-top: 5px solid currentColor; border-bottom: 0; }

.app { height: 100vh; display: grid; grid-template-rows: 23px 20px 65px 1fr 29px 48px; }

/* title and menu */
.titlebar { display: flex; align-items: center; gap: 6px; padding-left: 2px; background: #f2f2f2; color: #8a8a8a; font: 12px/20px "Open Sans", sans-serif; }
.winbtns { margin-left: auto; display: flex; padding-right: 2px; }
.winbtns button { width: 46px; height: 20px; display: grid; place-items: center; }
.winbtns svg { width: 12px; height: 12px; }
.menubar { display: flex; gap: 14px; padding-left: 7px; background: #fff; color: #5c5c5c; font: 13px/22px "Open Sans", sans-serif; }

/* toolbars */
.toolbars { padding: 7px 0 0 4px; }
.bar { display: flex; align-items: center; height: 24px; padding-left: 2px; }
.bar.two { height: 24px; margin-top: 6px; padding-left: 0; }
.grp { display: flex; align-items: center; gap: 6px; margin-right: 10px; }
.grp:nth-child(3) { margin-right: 3px; }
.grp.g-up { margin: 0 2px 0 7px; }
.grp.wide { gap: 10px; margin: 0 12px 0 7px; }
.active { width: 20px; height: 20px; margin: 0 -2px; display: grid; place-items: center; border: 1px solid #1a5c9c; border-radius: 3px; background: #cfe4f7; }
.combo { appearance: none; height: 20px; padding: 0 18px 0 3px; border: 1px solid #868686; border-radius: 2px; background: #fff url("data:image/svg+xml,%3Csvg xmlns='http://www.w3.org/2000/svg' width='9' height='6'%3E%3Cpath d='M1 1l3.500 3.500L8 1' fill='none' stroke='%23555'/%3E%3C/svg%3E") no-repeat right 4px center; color: #000; }
.c-zoom { width: 97px; }
.c-rot { width: 79px; }
.c-goto { width: 180px; margin: 0 9px 0 10px; }
.c-cust { width: 120px; margin-right: -3px; border-color: #eaeaea; background-color: #f6f6f6; color: #777; opacity: 1; }
.drop { display: flex; align-items: center; gap: 3px; margin-right: 13px; }
.drop + .drop { margin-right: 2px; }
.off { color: #8c8c8c; }
.sl { display: flex; align-items: center; height: 16px; gap: 4px; padding-right: 4px; margin-right: 6px; border-right: 1px solid #bdbdbd; }
.sl.st { padding-right: 9px; gap: 8px; margin-left: -1px; }
.sl.last { border: 0; gap: 8px; margin-left: 3px; }
.sl input[type=range] { appearance: none; width: 92px; height: 16px; margin: 0 2px 0 0; background: linear-gradient(#c4c4c4, #c4c4c4) center / 100% 2px no-repeat; }
.sl input[type=range].live { background-image: linear-gradient(#8a8680, #8a8680); }
.sl input::-webkit-slider-thumb { appearance: none; width: 7px; height: 15px; border: 1px solid #bdbdbd; border-radius: 3px 3px 0 0; background: #e6e6e6; }
.sl input.live::-webkit-slider-thumb { border-color: #77726a; background: #efece4; }
.num { width: 23px; height: 16px; padding: 0 3px; border: 1px solid #e6e6e6; background: #f4f4f4; color: #666; }
.num.live { background: #fff; border-color: #fff; border-bottom-color: #888; color: #000; }
.rf { margin-left: 3px; color: #9a9a9a; }
.rf.dark { color: #333c44; }
.toggles { display: flex; }
.toggles button { width: 22px; height: 20px; display: grid; place-items: center; border: 1px solid #555; border-width: 1px 0 0 1px; }
.toggles .on { background: #fff; border-width: 0 1px 1px 0; }

/* work area */
.work { display: grid; grid-template-columns: 243px 1fr 354px; min-height: 0; }
.panel { display: flex; flex-direction: column; min-width: 0; min-height: 0; }
.panel.left { padding: 0 6px 0 3px; }
.panel.right { padding: 0 8px 0 7px; }
.phead { display: flex; align-items: center; justify-content: space-between; height: 21px; padding: 1px 3px 0 24px; border: 1px solid #fff; border-bottom-color: #8c8c8c; border-right: 0; background: linear-gradient(#c6c6c6, #dadada 50%, #c8c8c8); }
.ptools { display: flex; align-items: center; gap: 10px; height: 25px; padding-left: 4px; }
.ptools .star { margin-left: 11px; }
.ptools .star + .ic { margin-left: -2px; }
.search { display: flex; align-items: center; gap: 8px; margin-top: 6px; }
.search input { flex: 1; height: 22px; margin-left: 1px; padding: 0 2px; border: 0; border-bottom: 1px solid #888; background: #fff; }
.search input::placeholder { color: #888; }
.search .ic { margin-right: 4px; color: #333c44; }
.path { flex: none; height: 21px; margin: 2px 1px 0; padding: 0 1px; line-height: 16px; border: 1px solid #fff; border-bottom: 1px solid #888; white-space: nowrap; overflow: hidden; }
.treebox { flex: 1; display: flex; flex-direction: column; justify-content: space-between; min-height: 0; border: 1px solid #82858b; background: #fff; overflow: hidden; }
.right .treebox { border-right: 0; }
.tree { padding: 1px 0 0 8px; }
.tree ul { margin-left: 19px; }
.tree li { background: repeating-linear-gradient(#888 0 1px, transparent 1px 2px) 4px 0 / 1px 100% no-repeat; }
.tree li:last-child { background-size: 1px 8px; }
.tree > li:first-child { background-position: 4px 8px; }
.row { display: flex; align-items: center; height: 16px; white-space: nowrap; background: repeating-linear-gradient(90deg, #888 0 1px, transparent 1px 2px) 4px 8px / 11px 1px no-repeat; }
.leaf { padding-left: 15px; }
.exp { flex: none; width: 9px; height: 9px; margin-right: 6px; border: 1px solid #8a8a8a; border-radius: 1px; background: linear-gradient(#2c4c9c, #2c4c9c) center / 5px 1px no-repeat, #f6f6f6; }
.exp.plus { background: linear-gradient(#2c4c9c, #2c4c9c) center / 5px 1px no-repeat, linear-gradient(#2c4c9c, #2c4c9c) center / 1px 5px no-repeat, #f6f6f6; }
.lbl { margin-left: 2px; padding: 0 2px; }
.sel { background: #0078d7; color: #fff; }
.row input { appearance: none; flex: none; display: grid; place-items: center; width: 13px; height: 13px; margin: 0 2px 0 1px; border: 1px solid #666; border-radius: 3px; background: #f6f6f6; }
.row input:checked { border-color: #005fb8; background: #005fb8; }
.row input:checked::before { content: ""; width: 6px; height: 3px; margin-top: -2px; border: solid #fff; border-width: 0 0 1px 1px; transform: rotate(-45deg); }
.hscroll { height: 16px; margin: 0 1px 1px; padding: 7px 0 0 17px; background: #efefef; }
.thumb { width: 55%; height: 2px; background: #868686; }
.view { position: relative; display: flex; justify-content: center; min-width: 0; min-height: 0; background: #fff; border: 1px solid #c4c4c4; border-width: 0 1px; margin-bottom: 1px; }
#scene { height: 100%; aspect-ratio: 601 / 522; background: #000; border: 1px solid #00b4b4; border-top: 0; image-rendering: pixelated; }
.north { position: absolute; right: 42px; top: 38px; width: 15px; height: 33px; }

/* status line */
.status { display: flex; gap: 4px; padding: 4px 3px; border-bottom: 1px solid #a9b8a9; }
.seg { flex: 1; border: 1px solid #fff; border-bottom-color: #808080; }
.prog { width: 121px; display: flex; justify-content: flex-end; border: 1px solid #777; border-right-color: #fff; border-bottom-color: #fff; }
.prog button { width: 19px; display: grid; place-items: center; border-left: 1px solid #999; }
.prog svg, .cfg svg { width: 14px; height: 14px; }
.cfg { width: 18px; display: grid; place-items: center; border: 1px solid #888; margin-left: -2px; }

/* taskbar */
.taskbar { display: grid; grid-template-columns: 1fr auto 1fr; background: #caefca; font: 12px/19px "Open Sans", "Noto Sans CJK SC", sans-serif; color: #1c1c1c; }
.apps { display: flex; align-items: center; padding-left: 2px; }
.app-tile { width: 44px; height: 48px; display: grid; justify-items: center; align-content: center; }
.app-tile svg { width: 24px; height: 24px; }
.run { grid-template-rows: 24px; row-gap: 4px; padding-top: 7px; }
.run::after { content: ""; grid-row: 2; width: 6px; height: 3px; border-radius: 2px; background: #70886f; }
.cur { background: linear-gradient(#ebf9eb, #ebf9eb) center / 38px 38px no-repeat; }
.cur::after { width: 16px; background: #0078d4; }
.pill { width: 98px; height: 30px; margin: 0 4px; display: flex; align-items: center; justify-content: center; gap: 5px; border-radius: 15px; background: #eef9ee; font-size: 13px; }
.pill svg { width: 14px; height: 14px; }
.tray { position: relative; display: flex; align-items: center; justify-content: flex-end; gap: 15px; padding-right: 20px; }
.chev { width: 12px; height: 8px; margin-right: 1px; }
.qq { width: 16px; height: 18px; }
.ime { font-size: 14px; margin-left: 2px; }
.vol { margin: 0 -6px 0 -2px; }
.clock { display: flex; flex-direction: column; align-items: flex-end; line-height: 16px; width: 60px; margin-left: 2px; white-space: nowrap; }
.badge { width: 16px; height: 16px; margin-left: -7px; border-radius: 8px; background: #0067c0; color: #fff; font-size: 10px; line-height: 16px; text-align: center; }
.mark { position: absolute; right: 14px; bottom: 9px; font: 19px/22px "Liberation Sans", sans-serif; color: rgba(225, 240, 225, .6); text-shadow: 1px 1px 1px rgba(60, 80, 60, .6); white-space: nowrap; }

/* dialog window */
.dialog { position: absolute; left: 704px; top: 302px; width: 531px; padding-bottom: 6px; border-radius: 8px; overflow: hidden; background: #efefef; box-shadow: 0 0 0 1px #333; line-height: 12px; }
.dhead { display: flex; align-items: center; gap: 5px; height: 25px; padding: 0 9px 0 3px; background: #e9f9e9; }
.dhead h1 { flex: 1; font: 12px/20px "Open Sans", sans-serif; color: #1c1c1c; }
.dhead button svg { width: 12px; height: 12px; }
.frame { border: 1px solid #6c6c6c; }
.dtop { display: flex; gap: 2px; padding: 9px 9px 0; }
.files { width: 253px; height: 240px; padding: 3px; }
.info { flex: 1; min-width: 0; padding: 3px 4px; }
.frame h3 { height: 15px; padding-top: 1px; text-align: center; }
.list { height: 218px; border: 1px solid #000; background: #fff; }
.list li { padding-left: 1px; }
.list .on { background: #0078d7; color: #fff; }
.info pre { height: 218px; padding: 2px 1px; border: 1px solid #fff; border-bottom-color: #808080; overflow: hidden; font: 10px/12px "Liberation Mono", "Noto Sans CJK SC", monospace; }
.cjk { font: 12px/12px "Noto Sans CJK SC", sans-serif; }
.dsub { display: flex; padding: 49px 0 0 6px; }
.btns { display: flex; gap: 4px; padding: 4px; height: 30px; }
.btns button { height: 20px; border: 1px solid #d0d0d0; border-bottom-color: #b8b8b8; border-radius: 4px; background: #fdfdfd; }
.b-sub { width: 106px; }
.btns output { width: 159px; height: 22px; margin-top: -1px; padding: 3px 1px; border: 1px solid #fff; border-bottom-color: #808080; }
.dsub .btns { padding-right: 3px; }
.dacts { display: flex; gap: 2px; padding: 9px 0 0 6px; }
.b-ok { width: 52px; }
.b-prev { width: 64px; }
.b-open { width: 44px; display: flex; align-items: center; justify-content: center; gap: 2px; }
```
FILE: scene.js
```js
// Draws the PPI raster: faint grey returns plus the red region-of-interest pixels.
const canvas = document.getElementById('scene');
const g = canvas.getContext('2d');
const UX = 601 / 1568, UY = 522 / 1568; // patch coordinates run 0..1568 on both axes
let seed = 7;
const rnd = () => { seed = (seed * 1664525 + 1013904223) >>> 0; return seed / 4294967296; };
const hash = (x, y) => { let h = (x * 374761393 + y * 668265263) | 0; h = Math.imul(h ^ (h >>> 13), 1274126177); return ((h ^ (h >>> 16)) >>> 0) / 4294967296; };
function noise(x, y) {
  const i = Math.floor(x), j = Math.floor(y), a = x - i, b = y - j;
  return (hash(i, j) * (1 - a) + hash(i + 1, j) * a) * (1 - b) + (hash(i, j + 1) * (1 - a) + hash(i + 1, j + 1) * a) * b;
}
function patch(pts, density, color, o = {}) {
  const { gx = 2.5, gy = 2.5, slant = 0, rough = 0.2 } = o;
  const p = pts.map(([x, y]) => [x * UX, y * UY]);
  const xs = p.map(q => q[0]), ys = p.map(q => q[1]);
  const path = new Path2D();
  p.forEach((q, i) => i ? path.lineTo(q[0], q[1]) : path.moveTo(q[0], q[1]));
  path.closePath();
  const cells = [];
  for (let y = Math.floor(Math.min(...ys)); y <= Math.max(...ys); y++)
    for (let x = Math.floor(Math.min(...xs)); x <= Math.max(...xs); x++)
      if (g.isPointInPath(path, x + rnd() * 4 - 1.5, y + rnd() * 4 - 1.5))
        cells.push([noise((x - y * slant) / gx, y / gy) * (1 - rough) + rnd() * rough, x, y]);
  cells.sort((a, b) => b[0] - a[0]);
  for (const c of cells.slice(0, Math.round(cells.length * density))) {
    if (color === 'grey') { const v = 8 + Math.floor(rnd() * 20); g.fillStyle = `rgb(${v},${v},${v})`; } else g.fillStyle = color;
    g.fillRect(c[1], c[2], 1, 1);
  }
}
const box = (x1, y1, x2, y2) => [[x1, y1], [x2, y1], [x2, y2], [x1, y2]];
const low = pts => pts.map(([x, y]) => [1050 + x * 0.5148, 1021 + y * 0.5847]); // south-east quadrant detail grid
const RED = '#f00';

// grey returns
patch(low([[300, 640], [600, 500], [730, 430], [830, 440], [880, 700], [970, 930], [80, 930], [190, 760]]), .26, 'grey', { gx: 1.5, gy: 1.5 });
patch(low([[320, 235], [540, 190], [790, 60], [1015, 20], [1015, 200], [590, 430], [430, 470]]), .16, 'grey', { slant: .4, gy: 6 });
patch(box(1290, 0, 1568, 400), .05, 'grey');
patch(box(1280, 400, 1480, 620), .04, 'grey');
patch(box(0, 1100, 260, 1500), .01, 'grey');
patch(box(270, 420, 420, 700), .02, 'grey');
patch(box(190, 20, 310, 130), .02, 'grey');
patch(box(740, 1070, 940, 1170), .01, 'grey');

// bright outcrop
patch(low([[160, 340], [235, 345], [240, 400], [265, 430], [215, 450], [200, 490], [165, 515], [135, 520], [130, 570], [110, 570], [100, 545], [80, 560], [75, 585], [30, 595], [45, 560], [40, 490], [60, 450], [75, 410], [110, 375], [145, 355]]), .95, RED);
patch(low([[150, 500], [250, 430], [255, 540], [245, 620], [200, 640], [165, 590]]), .38, RED, { gx: 1.5, gy: 1.5 });
patch(low([[175, 570], [240, 570], [240, 620], [200, 638]]), .65, RED);
patch(low([[265, 470], [310, 480], [280, 600], [270, 560]]), .25, RED);
patch(low([[315, 515], [345, 515], [345, 550], [320, 550]]), .95, RED);
patch(low([[160, 660], [180, 670], [178, 690], [165, 690]]), .8, RED);

// south-east fan
patch(low([[410, 620], [520, 580], [600, 510], [670, 515], [720, 600], [770, 760], [800, 930], [320, 930], [360, 770], [420, 730]]), .42, RED, { gx: 1.5, gy: 2 });
patch(low([[415, 620], [500, 600], [590, 570], [650, 560], [670, 640], [720, 740], [640, 780], [600, 890], [560, 770], [460, 745], [430, 700]]), .55, RED, { gx: 2.5, gy: 4 });
patch(low([[420, 660], [480, 640], [480, 740], [440, 740]]), .75, RED);
patch(low([[530, 630], [570, 640], [565, 780], [540, 780]]), .8, RED);
patch(low([[360, 770], [450, 790], [480, 900], [430, 930], [380, 850]]), .5, RED);
patch(low([[300, 640], [360, 700], [380, 930], [75, 930], [190, 850], [200, 780]]), .26, RED, { gx: 1.5, gy: 1.2 });
patch(low([[680, 560], [780, 720], [870, 930], [780, 930]]), .26, RED, { gx: 1.5, gy: 2 });

// ridge of slanted streaks
patch(low([[350, 240], [400, 240], [480, 300], [530, 440], [470, 475], [400, 420]]), .15, RED, { slant: .4, gy: 3 });
patch(low([[490, 215], [550, 190], [560, 330], [600, 350], [520, 320]]), .24, RED, { slant: .4, gy: 5 });
patch(low([[560, 210], [650, 200], [670, 380], [600, 350]]), .08, RED, { slant: .3, gy: 4 });
patch(low([[650, 140], [680, 145], [685, 185], [650, 180]]), .6, RED);
patch(low([[640, 190], [670, 190], [660, 310], [640, 300]]), .35, RED);
patch(low([[700, 260], [790, 230], [790, 300], [740, 390], [700, 390]]), .18, RED);
patch(low([[790, 56], [840, 56], [840, 72], [790, 70]]), .9, RED);
patch(low([[840, 70], [890, 100], [890, 155], [850, 145], [835, 110]]), .5, RED, { slant: .4, gy: 4 });
patch(low([[880, 50], [900, 60], [940, 120], [920, 130]]), .6, RED);
patch(low([[930, 40], [958, 40], [958, 80], [935, 75]]), .85, RED);
patch(low([[975, 28], [1015, 28], [1015, 165], [1000, 150]]), .48, RED, { gx: 2, gy: 6 });
patch(low([[790, 140], [990, 110], [1010, 200], [850, 320]]), .08, RED, { slant: .4, gy: 4 });

// north-east slopes
patch([[1450, 0], [1568, 0], [1568, 110], [1500, 120], [1480, 50]], .12, RED, { slant: .5 });
patch([[1490, 100], [1568, 80], [1560, 215], [1460, 210]], .12, RED);
patch([[1300, 30], [1360, 20], [1370, 75], [1290, 80]], .14, RED);
patch(box(1344, 20, 1364, 70), .4, RED);
patch(box(1336, 80, 1380, 200), .09, RED, { gy: 5 });
patch(box(1358, 172, 1367, 205), .8, RED);
patch([[1450, 265], [1464, 270], [1480, 320], [1460, 300]], .9, RED);
patch([[1380, 300], [1415, 225], [1425, 300], [1390, 380], [1360, 370]], .15, RED);
patch(box(1360, 355, 1392, 382), .35, RED);
patch(box(1405, 225, 1425, 245), .4, RED);
patch(box(1500, 220, 1550, 330), .03, RED);
patch(box(1286, 515, 1340, 585), .2, RED);
patch(box(1310, 520, 1340, 560), .65, RED);
patch([[1340, 490], [1370, 485], [1410, 530], [1400, 555], [1370, 515], [1345, 500]], .55, RED);
patch(box(1355, 560, 1400, 610), .04, RED);

// western scatter
patch(box(265, 0, 300, 18), .3, RED);
patch(box(270, 440, 410, 580), .015, RED);
patch([[360, 600], [374, 605], [368, 640], [355, 630]], .8, RED);
patch([[340, 655], [370, 655], [378, 690], [350, 680]], .55, RED);
patch(box(176, 855, 190, 910), .45, RED);
patch(box(170, 840, 205, 925), .1, RED);
patch(box(250, 760, 400, 900), .008, RED);
patch(box(270, 930, 380, 945), .3, RED);
patch(box(315, 940, 332, 978), .45, RED);
patch(box(150, 1000, 320, 1170), .012, RED);
patch(box(0, 1115, 40, 1150), .35, RED);
patch(box(0, 1150, 30, 1220), .15, RED);
patch(box(40, 1100, 90, 1170), .04, RED);
patch(box(115, 1280, 165, 1400), .07, RED);
patch(box(95, 1540, 120, 1568), .35, RED);
patch(box(940, 1045, 988, 1070), .35, '#c00000');

// isolated pixels: x, y, width, height
[[190, 26, 5, 4], [245, 75, 4, 3], [320, 182, 4, 3], [95, 540, 5, 6], [122, 565, 4, 3], [12, 637, 5, 3], [222, 633, 8, 4], [256, 768, 5, 8], [304, 505, 9, 7], [332, 463, 6, 6], [355, 405, 8, 4], [380, 417, 6, 6], [272, 460, 4, 10], [330, 515, 5, 12], [308, 672, 8, 8], [432, 834, 7, 3], [453, 1003, 5, 4], [290, 1280, 6, 5], [322, 1120, 6, 9], [190, 1165, 6, 5], [164, 1056, 12, 4], [303, 1060, 6, 5], [752, 1148, 6, 5], [853, 1206, 8, 5], [872, 1190, 5, 4], [914, 1140, 9, 5], [932, 1096, 6, 5], [945, 1108, 4, 4], [888, 1152, 4, 6], [690, 1057, 10, 4], [687, 1092, 6, 3], [750, 1040, 6, 3], [777, 1102, 4, 3], [830, 1110, 4, 3], [22, 1445, 8, 3], [164, 1442, 4, 4], [142, 1482, 5, 6], [118, 1382, 6, 4], [1302, 780, 4, 3], [1330, 605, 4, 4], [168, 1115, 4, 18], [130, 1225, 5, 7], [95, 1255, 4, 4], [1210, 1325, 14, 14]].forEach(([x, y, w, h]) => {
  g.fillStyle = RED;
  g.fillRect(Math.round(x * UX), Math.round(y * UY), Math.max(1, Math.round(w * UX)), Math.max(1, Math.round(h * UY)));
});
```
